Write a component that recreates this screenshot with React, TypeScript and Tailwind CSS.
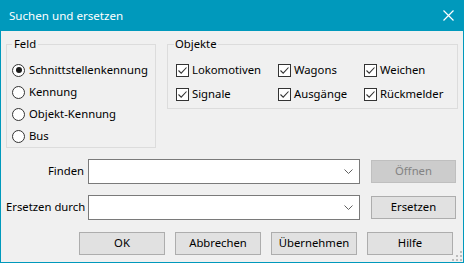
import React from "react";

const font = { fontFamily: '"Noto Sans", "Open Sans", sans-serif' };

const Radio = ({ label, checked }: { label: string; checked?: boolean }) => (
  <label className="flex items-center h-[22px] gap-[4px]">
    <span className="w-[13px] h-[13px] rounded-full border border-[#333333] bg-white flex items-center justify-center">
      {checked && <span className="w-[6px] h-[6px] rounded-full bg-[#1a1a1a]" />}
    </span>
    <span>{label}</span>
  </label>
);

const Check = ({ label }: { label: string }) => (
  <label className="flex items-center h-[24px] gap-[3px]">
    <span className="w-[13px] h-[13px] border border-[#333333] bg-white flex items-center justify-center">
      <svg width="11" height="11" viewBox="0 0 11 11">
        <path d="M1.5 5.5 L4.2 8.2 L9.5 2.5" fill="none" stroke="#333333" strokeWidth="1.1" />
      </svg>
    </span>
    <span>{label}</span>
  </label>
);

const Btn = ({ children, disabled, w = "w-[86px]" }: { children: React.ReactNode; disabled?: boolean; w?: string }) => (
  <button
    className={
      disabled
        ? `${w} h-[23px] bg-[#cccccc] border border-[#bfbfbf] text-[#838383]`
        : `${w} h-[23px] bg-[#e1e1e1] border border-[#adadad] text-black`
    }
  >
    {children}
  </button>
);

const Combo = () => (
  <div className="w-[272px] h-[25px] bg-white border border-[#7a7a7a] flex items-center justify-end pr-[6px]">
    <svg width="9" height="5" viewBox="0 0 9 5">
      <path d="M0.5 0.5 L4.5 4.5 L8.5 0.5" fill="none" stroke="#606060" strokeWidth="1" />
    </svg>
  </div>
);

export default function App() {
  return (
    <div className="w-[464px] h-[263px] flex flex-col text-[11.3px] text-black relative" style={font}>
      <div className="h-[31px] shrink-0 bg-[#0099bc] flex items-center justify-between pl-[9px] pr-[10px] text-white text-[11.6px]">
        <span>Suchen und ersetzen</span>
        <svg width="11" height="11" viewBox="0 0 11 11">
          <path d="M0.5 0.5 L10.5 10.5 M10.5 0.5 L0.5 10.5" stroke="white" strokeWidth="1.2" />
        </svg>
      </div>
      <div className="flex-1 bg-[#f0f0f0] border-x border-b border-[#0099bc] flex flex-col">
        <div className="flex mt-[5px] ml-[5px] gap-[11px] items-start">
          <fieldset className="w-[150px] h-[112px] border border-[#dcdcdc] pl-[5px] pt-[7px]">
            <legend className="px-[2px] leading-[16px]">Feld</legend>
            <Radio label="Schnittstellenkennung" checked />
            <Radio label="Kennung" />
            <Radio label="Objekt-Kennung" />
            <Radio label="Bus" />
          </fieldset>
          <fieldset className="w-[291px] h-[73px] border border-[#dcdcdc] pl-[6px] pt-[6px]">
            <legend className="px-[1px] leading-[16px]">Objekte</legend>
            <div className="grid grid-cols-[102px_86px_1fr] pl-[2px]">
              <Check label="Lokomotiven" />
              <Check label="Wagons" />
              <Check label="Weichen" />
              <Check label="Signale" />
              <Check label="Ausgänge" />
              <Check label="Rückmelder" />
            </div>
          </fieldset>
        </div>
        <div className="flex items-center mt-[11px] pl-[5px]">
          <span className="w-[78px] text-right whitespace-nowrap">Finden</span>
          <div className="ml-[4px]">
            <Combo />
          </div>
          <div className="ml-[11px]">
            <Btn disabled w="w-[85px]">Öffnen</Btn>
          </div>
        </div>
        <div className="flex items-center mt-[11px] pl-[5px]">
          <span className="w-[78px] text-right whitespace-nowrap">Ersetzen durch</span>
          <div className="ml-[4px]">
            <Combo />
          </div>
          <div className="ml-[11px]">
            <Btn w="w-[85px]">Ersetzen</Btn>
          </div>
        </div>
        <div className="flex justify-end gap-[10px] mt-[12px] pr-[10px]">
          <Btn>OK</Btn>
          <Btn>Abbrechen</Btn>
          <Btn>Übernehmen</Btn>
          <Btn>Hilfe</Btn>
        </div>
      </div>
      <svg className="absolute right-[2px] bottom-[2px]" width="10" height="10" viewBox="0 0 10 10">
        <g fill="#bcbcbc">
          <rect x="8" y="0" width="2" height="2" />
          <rect x="4" y="4" width="2" height="2" />
          <rect x="8" y="4" width="2" height="2" />
          <rect x="0" y="8" width="2" height="2" />
          <rect x="4" y="8" width="2" height="2" />
          <rect x="8" y="8" width="2" height="2" />
        </g>
      </svg>
    </div>
  );
}
